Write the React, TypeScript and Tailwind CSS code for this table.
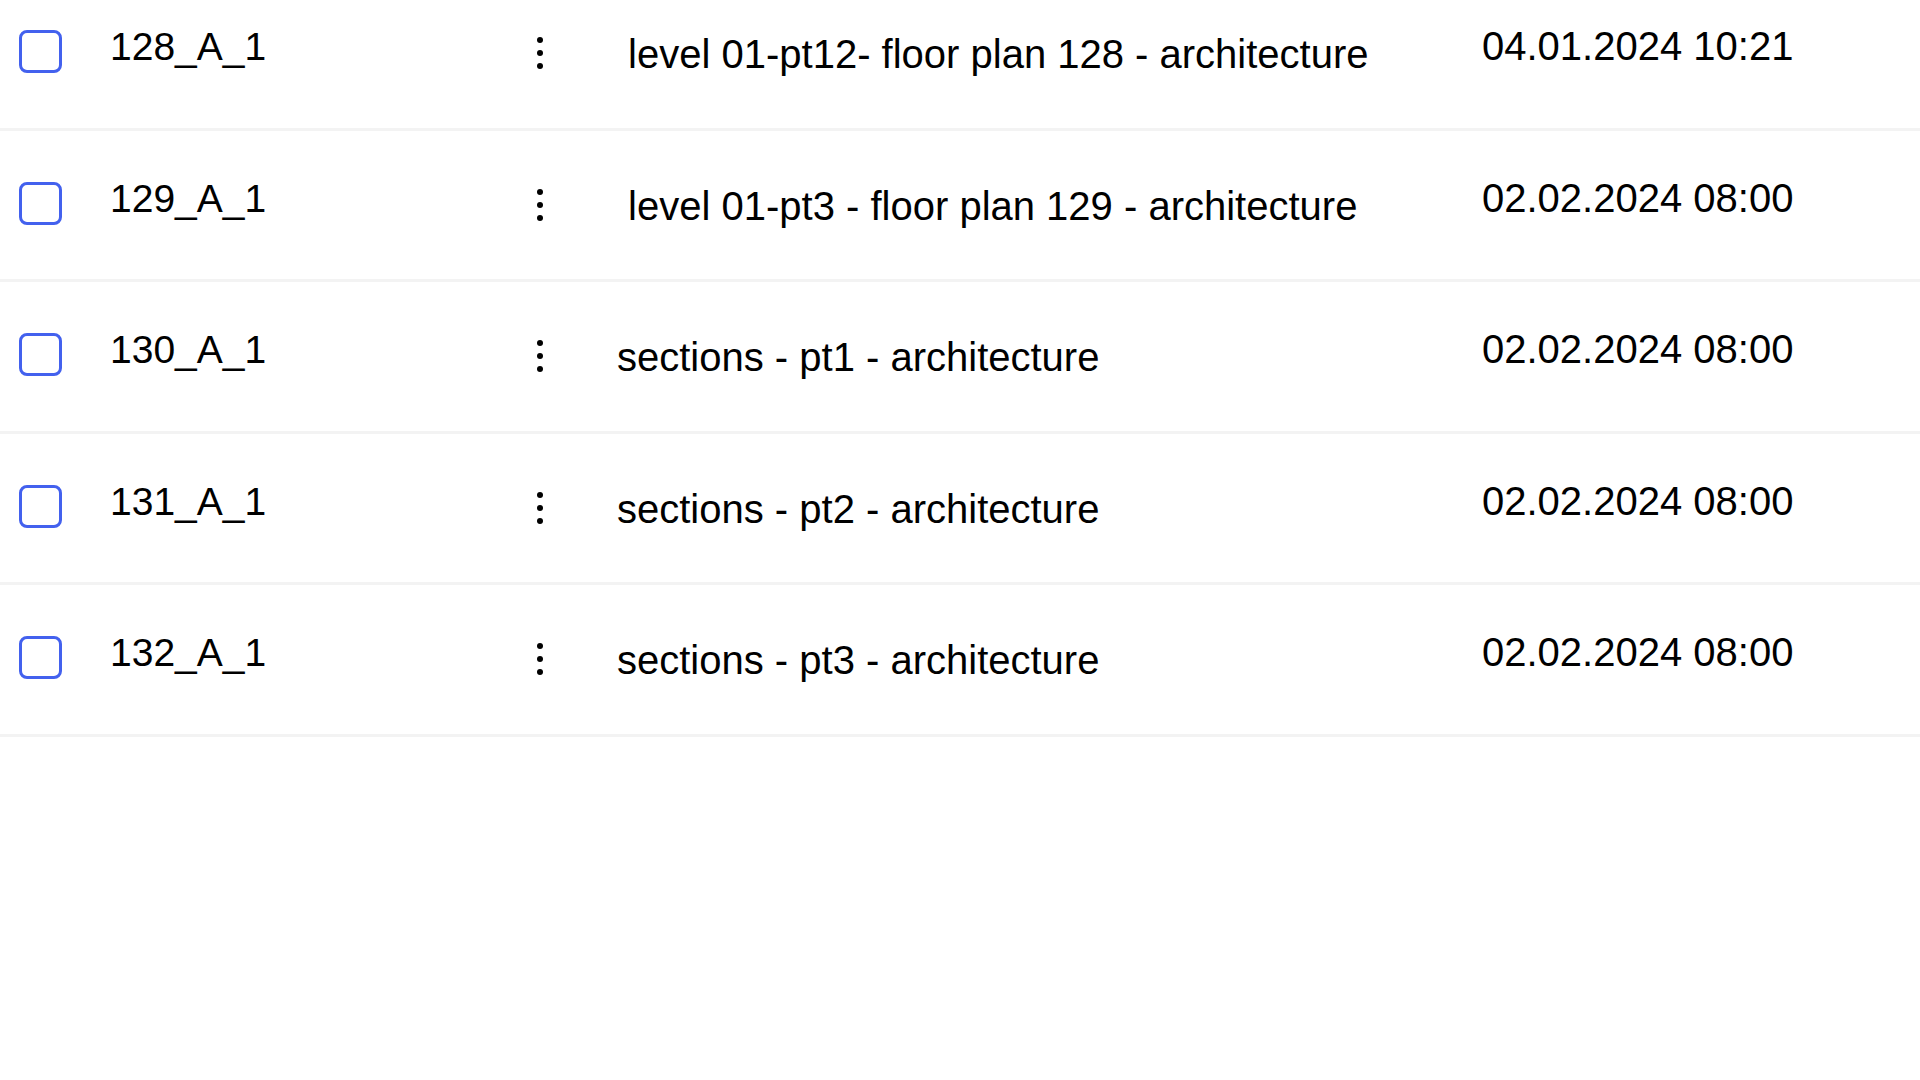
import React from "react";

interface SheetRow {
  id: string;
  title: string;
  updated: string;
}

const rows: SheetRow[] = [
  { id: "128_A_1", title: "\u00A0level 01-pt12- floor plan 128 - architecture", updated: "04.01.2024 10:21" },
  { id: "129_A_1", title: "\u00A0level 01-pt3 - floor plan 129 - architecture", updated: "02.02.2024 08:00" },
  { id: "130_A_1", title: "sections - pt1 - architecture", updated: "02.02.2024 08:00" },
  { id: "131_A_1", title: "sections - pt2 - architecture", updated: "02.02.2024 08:00" },
  { id: "132_A_1", title: "sections - pt3 - architecture", updated: "02.02.2024 08:00" },
];

const Kebab = () => (
  <div className="flex flex-col items-center gap-[7px]">
    <span className="size-[6px] rounded-full bg-black" />
    <span className="size-[6px] rounded-full bg-black" />
    <span className="size-[6px] rounded-full bg-black" />
  </div>
);

const Row = ({ id, title, updated }: SheetRow) => (
  <div className="grid h-[151.5px] grid-cols-[110px_418px_24px_930px_1fr] border-b-[3px] border-[#f3f3f3]">
    <div className="pl-[19px] pt-[51px]">
      <div className="size-[43px] rounded-[8px] border-[3px] border-[#4361ee] bg-white" />
    </div>
    <p className="pt-[45px] text-[39px] leading-[46px] whitespace-nowrap">{id}</p>
    <div className="flex justify-center pt-[58px]">
      <Kebab />
    </div>
    <p className="pl-[65px] pt-[52px] leading-[46px] whitespace-nowrap">{title}</p>
    <p className="pt-[44px] leading-[46px] whitespace-nowrap">{updated}</p>
  </div>
);

export default function App() {
  return (
    <div className="h-screen overflow-hidden bg-white text-[40px] text-black font-['Liberation_Sans',Arial,sans-serif]">
      <div className="-mt-[21px]">
        {rows.map((r) => (
          <Row key={r.id} {...r} />
        ))}
      </div>
    </div>
  );
}
